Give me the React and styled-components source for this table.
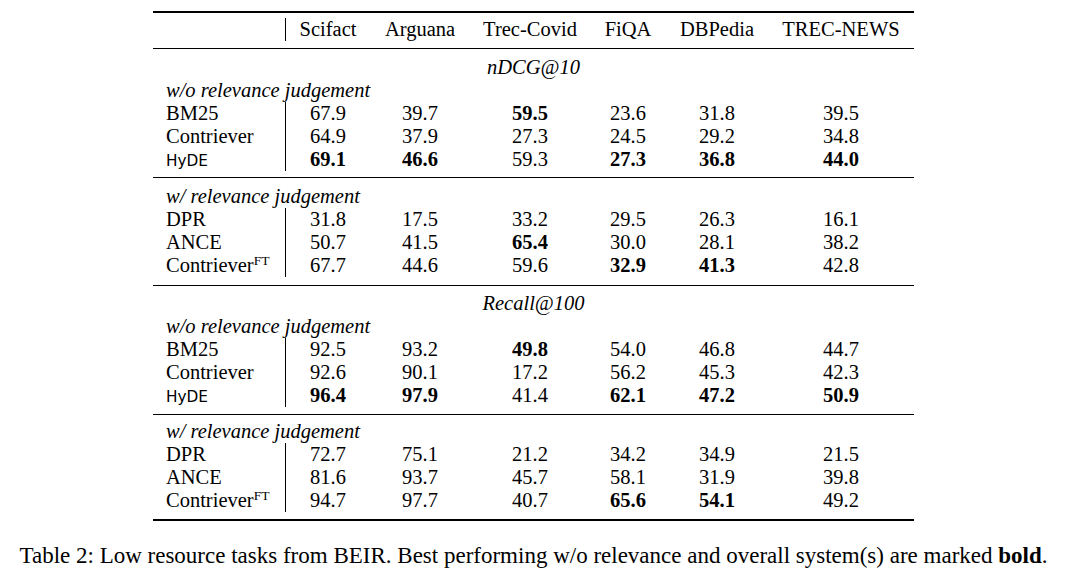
import React from "react";
import styled, { createGlobalStyle } from "styled-components";

const GlobalStyle = createGlobalStyle`
  body {
    margin: 0;
    background: #fff;
    color: #000;
    font-family: "Liberation Serif", "Times New Roman", serif;
  }
`;

const COLS = "133px 84px 100px 120px 76px 102px 146px";

const Page = styled.div`
  display: flex;
  flex-direction: column;
  align-items: center;
  padding-top: 11px;
`;

const Table = styled.div`
  width: 761px;
  border-top: 2px solid #000;
  border-bottom: 2px solid #000;
  font-size: 20.5px;
  line-height: 23px;
`;

const HeaderRow = styled.div`
  display: grid;
  grid-template-columns: ${COLS};
  padding: 5px 0 7px;
  border-bottom: 1px solid #000;
`;

const Block = styled.div`
  padding: ${(p) => p.$pt}px 0 ${(p) => p.$pb}px;
  & + & {
    border-top: 1px solid #000;
  }
`;

const Row = styled.div`
  display: grid;
  grid-template-columns: ${COLS};
  height: 23px;
`;

const LabelCell = styled.div`
  padding-left: 13px;
  border-right: 1px solid #000;
  white-space: nowrap;
`;

const Cell = styled.div`
  text-align: center;
  font-weight: ${(p) => (p.$bold ? 700 : 400)};
`;

const MetricTitle = styled.div`
  font-style: italic;
  text-align: center;
`;

const GroupLabel = styled.div`
  font-style: italic;
  padding-left: 13px;
`;

const SysName = styled.span`
  font-family: "DejaVu Sans", "Liberation Sans", sans-serif;
  font-size: 15.3px;
  line-height: 0;
`;

const Sup = styled.sup`
  font-size: 13.5px;
  line-height: 0;
  vertical-align: 7px;
`;

const Caption = styled.p`
  margin: 22px 0 0;
  font-size: 23px;
  line-height: 26px;
  text-align: center;
`;

const datasets = ["Scifact", "Arguana", "Trec-Covid", "FiQA", "DBPedia", "TREC-NEWS"];

const names = {
  bm25: "BM25",
  con: "Contriever",
  hyde: <SysName>HyDE</SysName>,
  dpr: "DPR",
  ance: "ANCE",
  conft: (
    <>
      Contriever<Sup>FT</Sup>
    </>
  ),
};

// "*" marks a bold value
const sections = [
  {
    metric: "nDCG@10",
    groups: [
      {
        label: "w/o relevance judgement",
        pad: [7, 6],
        rows: [
          ["bm25", "67.9", "39.7", "*59.5", "23.6", "31.8", "39.5"],
          ["con", "64.9", "37.9", "27.3", "24.5", "29.2", "34.8"],
          ["hyde", "*69.1", "*46.6", "59.3", "*27.3", "*36.8", "*44.0"],
        ],
      },
      {
        label: "w/ relevance judgement",
        pad: [7, 8],
        rows: [
          ["dpr", "31.8", "17.5", "33.2", "29.5", "26.3", "16.1"],
          ["ance", "50.7", "41.5", "*65.4", "30.0", "28.1", "38.2"],
          ["conft", "67.7", "44.6", "59.6", "*32.9", "*41.3", "42.8"],
        ],
      },
    ],
  },
  {
    metric: "Recall@100",
    groups: [
      {
        label: "w/o relevance judgement",
        pad: [6, 7],
        rows: [
          ["bm25", "92.5", "93.2", "*49.8", "54.0", "46.8", "44.7"],
          ["con", "92.6", "90.1", "17.2", "56.2", "45.3", "42.3"],
          ["hyde", "*96.4", "*97.9", "41.4", "*62.1", "*47.2", "*50.9"],
        ],
      },
      {
        label: "w/ relevance judgement",
        pad: [5, 7],
        rows: [
          ["dpr", "72.7", "75.1", "21.2", "34.2", "34.9", "21.5"],
          ["ance", "81.6", "93.7", "45.7", "58.1", "31.9", "39.8"],
          ["conft", "94.7", "97.7", "40.7", "*65.6", "*54.1", "49.2"],
        ],
      },
    ],
  },
];

const DataRow = ({ row }) => {
  const [key, ...values] = row;
  return (
    <Row>
      <LabelCell>{names[key]}</LabelCell>
      {values.map((v, i) => (
        <Cell key={i} $bold={v.startsWith("*")}>
          {v.replace("*", "")}
        </Cell>
      ))}
    </Row>
  );
};

const App = () => {
  const blocks = [];
  sections.forEach((section, si) => {
    section.groups.forEach((group, gi) => {
      blocks.push(
        <Block key={`${si}-${gi}`} $pt={group.pad[0]} $pb={group.pad[1]}>
          {gi === 0 && <MetricTitle>{section.metric}</MetricTitle>}
          <GroupLabel>{group.label}</GroupLabel>
          {group.rows.map((r, ri) => (
            <DataRow key={ri} row={r} />
          ))}
        </Block>
      );
    });
  });

  return (
    <Page>
      <GlobalStyle />
      <Table>
        <HeaderRow>
          <LabelCell>&nbsp;</LabelCell>
          {datasets.map((d) => (
            <Cell key={d}>{d}</Cell>
          ))}
        </HeaderRow>
        {blocks}
      </Table>
      <Caption>
        Table 2: Low resource tasks from BEIR. Best performing w/o relevance and
        overall system(s) are marked <b>bold</b>.
      </Caption>
    </Page>
  );
};

export default App;
